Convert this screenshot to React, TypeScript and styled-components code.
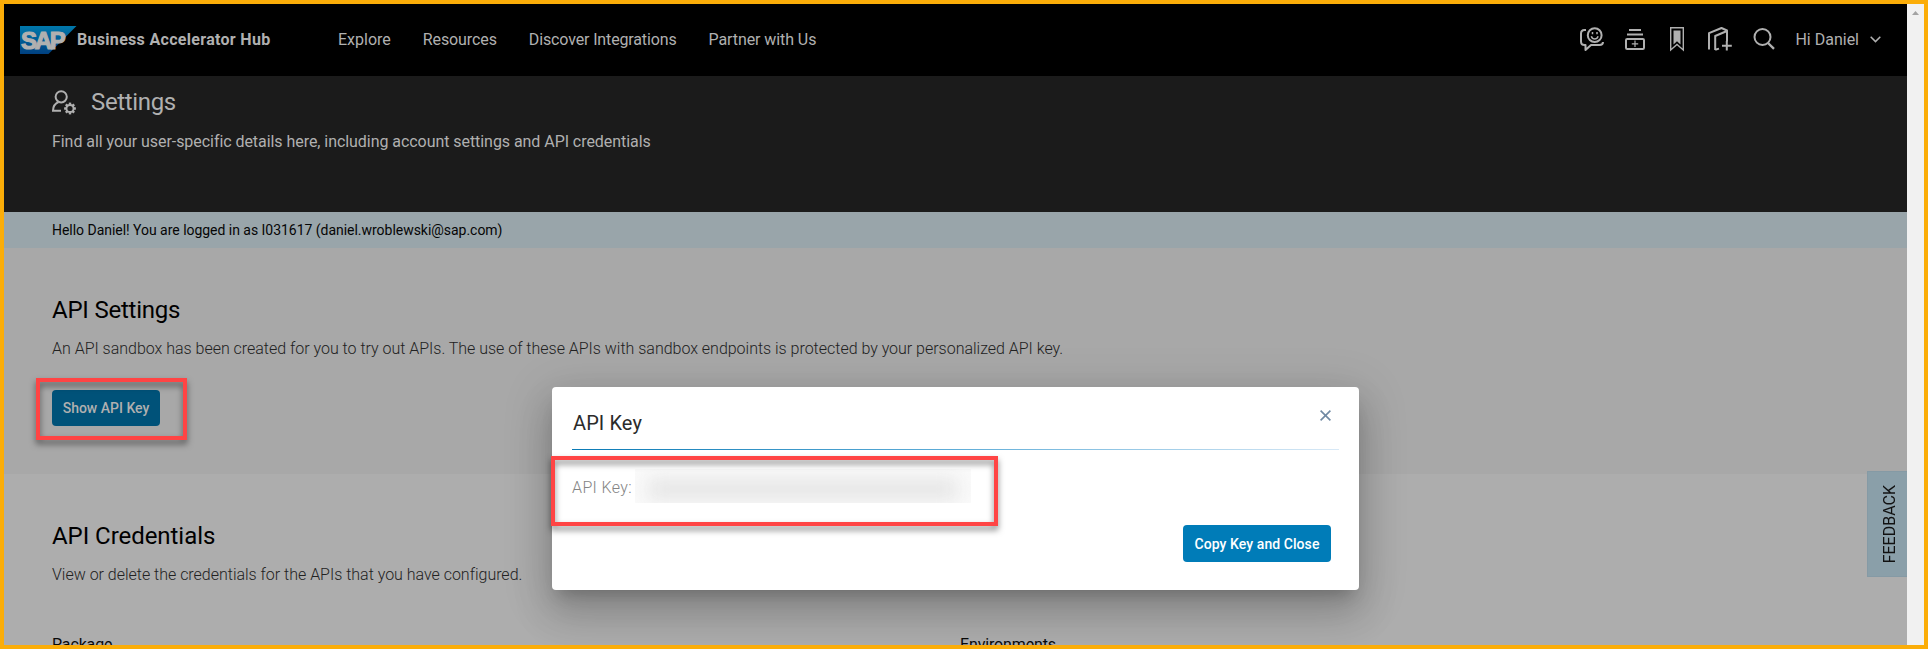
import React from 'react';
import styled, { createGlobalStyle } from 'styled-components';

const GlobalStyle = createGlobalStyle`
  * { box-sizing: border-box; }
  body { margin: 0; font-family: Roboto, "Liberation Sans", sans-serif; }
  h1, h2, h3, p { margin: 0; font-weight: 400; }
  svg { display: block; flex: none; }
`;

const Window = styled.div`
  position: relative;
  display: flex;
  width: 1928px;
  height: 649px;
  border: 4px solid #fbad08;
  overflow: hidden;
`;

const Page = styled.div`
  flex: 1;
  display: flex;
  flex-direction: column;
  height: 641px;
  overflow: hidden;
`;

const Scrollbar = styled.div`
  width: 17px;
  background: #f1f1f1;
  display: flex;
  justify-content: center;
  padding-top: 7px;
`;

const Header = styled.header`
  flex: none;
  display: flex;
  align-items: center;
  height: 72px;
  padding: 0 26px 0 16px;
  background: #000;
  color: #b0b0b0;
`;

const Brand = styled.div`
  display: flex;
  align-items: center;
  width: 318px;
  font-size: 16px;
  font-weight: 700;
  letter-spacing: 0.31px;
  white-space: nowrap;
`;

const BrandName = styled.span`
  padding-bottom: 2px;
`;

const Nav = styled.nav`
  display: flex;
  gap: 32px;
  padding-bottom: 2px;
  font-size: 16px;
`;

const NavLink = styled.a<{ $spacing: number }>`
  letter-spacing: ${(p) => p.$spacing}px;
`;

const Tools = styled.div`
  margin-left: auto;
  display: flex;
  align-items: center;
  height: 28px;
  padding-bottom: 2px;
`;

const ToolIcon = styled.span<{ $gap: number }>`
  margin-right: ${(p) => p.$gap}px;
`;

const UserMenu = styled.div`
  display: flex;
  align-items: center;
  gap: 11px;
  font-size: 16px;
`;

const Hero = styled.section`
  flex: none;
  height: 136px;
  padding: 12px 48px;
  background: #1b1b1b;
  color: #b0b0b0;
`;

const HeroTitle = styled.h1`
  display: flex;
  align-items: center;
  gap: 14px;
  height: 28px;
  font-size: 24px;
  line-height: 28px;
  letter-spacing: -0.35px;
`;

const HeroText = styled.p`
  margin-top: 16px;
  font-size: 16px;
  line-height: 20px;
  letter-spacing: -0.055px;
`;

const LoginBar = styled.div`
  flex: none;
  height: 36px;
  padding-left: 48px;
  background: #99a5aa;
  color: #060606;
  font-size: 14px;
  line-height: 36px;
  letter-spacing: -0.03px;
`;

const Section = styled.section<{ $height: number; $tone: string }>`
  flex: none;
  height: ${(p) => p.$height}px;
  padding: 46px 48px 0;
  background: ${(p) => p.$tone};
`;

const SectionTitle = styled.h2<{ $spacing: number }>`
  color: #000;
  font-size: 24px;
  line-height: 32px;
  letter-spacing: ${(p) => p.$spacing}px;
`;

const SectionText = styled.p`
  margin-top: 11px;
  color: #222;
  font-size: 16px;
  font-weight: 300;
  line-height: 24px;
  letter-spacing: -0.016px;
`;

const Button = styled.button<{ $dimmed?: boolean }>`
  height: ${(p) => (p.$dimmed ? 36 : 37)}px;
  width: ${(p) => (p.$dimmed ? 108 : 148)}px;
  padding: 0;
  border: 0;
  border-radius: 4px;
  background: ${(p) => (p.$dimmed ? '#005279' : '#007cb8')};
  color: ${(p) => (p.$dimmed ? '#b0b0b0' : '#fff')};
  font: 500 14px Roboto, "Liberation Sans", sans-serif;
  letter-spacing: ${(p) => (p.$dimmed ? 0 : 0.07)}px;
`;

const ShowKey = styled.div`
  margin-top: 29px;
`;

const Columns = styled.div`
  display: grid;
  grid-template-columns: 908px 1fr;
  margin-top: 48px;
  color: #0a0a0a;
  font-size: 16px;
  line-height: 20px;
  letter-spacing: -0.15px;
`;

const Feedback = styled.div`
  position: absolute;
  right: 17px;
  top: 467px;
  display: flex;
  align-items: center;
  justify-content: center;
  width: 40px;
  height: 106px;
  padding-left: 4px;
  border: 1px solid #859aa5;
  border-right: 0;
  background: #8a9fa9;
  color: #111;
  font-size: 16px;
  writing-mode: vertical-rl;

  span { transform: rotate(180deg); }
`;

const Dialog = styled.div`
  position: absolute;
  left: 548px;
  top: 383px;
  display: flex;
  flex-direction: column;
  width: 807px;
  height: 203px;
  padding: 22px 20px 0;
  border-radius: 4px;
  background: #fff;
  box-shadow: 0 11px 15px -7px rgba(0, 0, 0, 0.2), 0 24px 38px 3px rgba(0, 0, 0, 0.14),
    0 9px 46px 8px rgba(0, 0, 0, 0.12);
`;

const DialogHead = styled.div`
  display: flex;
  justify-content: space-between;
  height: 40px;
  padding: 0 8px 0 1px;
`;

const DialogTitle = styled.h3`
  color: #2b2b2b;
  font-size: 20px;
  line-height: 28px;
  letter-spacing: 0.1px;
`;

const CloseIcon = styled.svg`
  margin-top: 1px;
`;

const Rule = styled.div`
  flex: none;
  height: 1px;
  background: linear-gradient(90deg, #0a7ab5, #5fadd8 50%, #d9e9f6);
`;

const KeyRow = styled.div`
  display: flex;
  gap: 3px;
  height: 34px;
  margin-top: 19px;
  color: #848484;
  font-size: 16px;
  font-weight: 300;
  line-height: 37px;
  letter-spacing: 0.38px;
  white-space: nowrap;
`;

const HiddenKey = styled.div`
  width: 336px;
  height: 34px;
  overflow: hidden;
  background: #fafafa;

  &::before {
    content: '';
    display: block;
    width: 310px;
    height: 22px;
    margin: 9px 0 0 13px;
    background: #e6e6e6;
    filter: blur(9px);
  }
`;

const DialogFoot = styled.div`
  display: flex;
  justify-content: flex-end;
  margin-top: 22px;
  padding-right: 8px;
`;

const Marker = styled.div<{ $x: number; $y: number; $w: number; $h: number }>`
  position: absolute;
  left: ${(p) => p.$x}px;
  top: ${(p) => p.$y}px;
  width: ${(p) => p.$w}px;
  height: ${(p) => p.$h}px;
  border: 4px solid #ff4444;
  filter: drop-shadow(0 4px 3px rgba(0, 0, 0, 0.5));
`;

const LogoText = styled.text`
  font: 700 24px "Liberation Sans", sans-serif;
`;

const Logo = () => (
  <svg width="57" height="28" viewBox="0 0 57 28">
    <defs>
      <linearGradient id="sap" x1="0" y1="0" x2="0" y2="1">
        <stop offset="0" stopColor="#0078ab" />
        <stop offset="1" stopColor="#004080" />
      </linearGradient>
    </defs>
    <path d="M0 0H56.5L28.5 28H0Z" fill="url(#sap)" />
    <LogoText x="1" y="22.500" textLength="43" lengthAdjust="spacing" letterSpacing="-1.800" fill="#b0b0b0" stroke="#b0b0b0" strokeWidth="1.200">
      SAP
    </LogoText>
  </svg>
);

const stroke = { fill: 'none', stroke: '#b0b0b0' } as const;

const ChatIcon = () => (
  <svg width="24" height="25" viewBox="0 0 24 25" {...stroke} strokeWidth="2">
    <path d="M6 3H4.5Q1 3 1 6.5V14.500Q1 18 4.500 18H5.500V23L11 18H19.500Q23 18 23 15" strokeLinejoin="round" />
    <circle cx="14.700" cy="8.200" r="6.900" />
    <path d="M11.300 9.200Q12.200 12 14.700 12T18.100 9.200" strokeWidth="1.500" />
    <path d="M12.500 5V7.200M17 5V7.200" strokeWidth="1.500" />
  </svg>
);

const StackIcon = () => (
  <svg width="20" height="21" viewBox="0 0 20 21" {...stroke} strokeWidth="2">
    <path d="M4 1H16M2 5.500H18" />
    <rect x="1" y="10" width="18" height="10" rx="1.200" />
    <path d="M10 11.500V18M6.800 14.800H13.200" strokeWidth="1.200" />
  </svg>
);

const BookmarkIcon = () => (
  <svg width="14" height="25" viewBox="0 0 14 25" {...stroke}>
    <path d="M0.700 0.700H13.300V23L7 17.500L0.700 23Z" strokeWidth="1.400" />
    <path d="M3.500 3.500H10.500V17.500L7 14.200L3.500 17.500Z" fill="#b0b0b0" stroke="none" />
  </svg>
);

const PackageIcon = () => (
  <svg width="24" height="25" viewBox="0 0 24 25" {...stroke} strokeWidth="2" strokeLinejoin="round">
    <path d="M1 22.500V6.200L13.500 1L19 3.500V14.500" />
    <path d="M7.200 23V9L19 4" />
    <path d="M7.200 22.800L11 21.600M18.800 14V23.500M14 18.800H23.800" />
  </svg>
);

const SearchIcon = () => (
  <svg width="22" height="22" viewBox="0 0 22 22" {...stroke} strokeWidth="2">
    <circle cx="9.500" cy="9" r="8" />
    <path d="M15 15L21 20.800" strokeWidth="2.400" />
  </svg>
);

const Chevron = () => (
  <svg width="11" height="7" viewBox="0 0 11 7" {...stroke} strokeWidth="1.500">
    <path d="M0.700 0.700L5.500 5.600L10.300 0.700" />
  </svg>
);

const teeth = [0, 45, 90, 135, 180, 225, 270, 315];

const UserSettingsIcon = () => (
  <svg width="25" height="25" viewBox="0 0 25 25" {...stroke} strokeWidth="2">
    <circle cx="9.200" cy="6.800" r="5.600" />
    <path d="M6.500 12Q1 14.500 1 20.700H9" />
    <circle cx="18" cy="18.500" r="3.600" />
    {teeth.map((a) => (
      <path key={a} d="M18 14.800V12.600" strokeWidth="2.400" transform={`rotate(${a} 18 18.500)`} />
    ))}
  </svg>
);

export default function App() {
  return (
    <>
      <GlobalStyle />
      <Window>
        <Page>
          <Header>
            <Brand>
              <Logo />
              <BrandName>Business Accelerator Hub</BrandName>
            </Brand>
            <Nav>
              <NavLink $spacing={0}>Explore</NavLink>
              <NavLink $spacing={-0.1}>Resources</NavLink>
              <NavLink $spacing={-0.14}>Discover Integrations</NavLink>
              <NavLink $spacing={-0.08}>Partner with Us</NavLink>
            </Nav>
            <Tools>
              <ToolIcon $gap={21}><ChatIcon /></ToolIcon>
              <ToolIcon $gap={25}><StackIcon /></ToolIcon>
              <ToolIcon $gap={24}><BookmarkIcon /></ToolIcon>
              <ToolIcon $gap={21}><PackageIcon /></ToolIcon>
              <ToolIcon $gap={20}><SearchIcon /></ToolIcon>
              <UserMenu>
                Hi Daniel
                <Chevron />
              </UserMenu>
            </Tools>
          </Header>
          <Hero>
            <HeroTitle>
              <UserSettingsIcon />
              Settings
            </HeroTitle>
            <HeroText>
              Find all your user-specific details here, including account settings and API credentials
            </HeroText>
          </Hero>
          <LoginBar>Hello Daniel! You are logged in as I031617 (daniel.wroblewski@sap.com)</LoginBar>
          <Section $height={226} $tone="#a8a8a8">
            <SectionTitle $spacing={-0.22}>API Settings</SectionTitle>
            <SectionText>
              An API sandbox has been created for you to try out APIs. The use of these APIs with sandbox endpoints is
              protected by your personalized API key.
            </SectionText>
            <ShowKey>
              <Button $dimmed>Show API Key</Button>
            </ShowKey>
          </Section>
          <Section $height={175} $tone="#adadad">
            <SectionTitle $spacing={-0.05}>API Credentials</SectionTitle>
            <SectionText>View or delete the credentials for the APIs that you have configured.</SectionText>
            <Columns>
              <span>Package</span>
              <span>Environments</span>
            </Columns>
          </Section>
        </Page>
        <Scrollbar>
          <svg width="7" height="4" viewBox="0 0 7 4">
            <path d="M3.500 0L7 4H0Z" fill="#a3a3a3" />
          </svg>
        </Scrollbar>
        <Feedback>
          <span>FEEDBACK</span>
        </Feedback>
        <Dialog>
          <DialogHead>
            <DialogTitle>API Key</DialogTitle>
            <CloseIcon width="11" height="11" viewBox="0 0 11 11" fill="none" stroke="#7089a3" strokeWidth="1.600">
              <path d="M0.600 0.600L10.400 10.400M10.400 0.600L0.600 10.400" />
            </CloseIcon>
          </DialogHead>
          <Rule />
          <KeyRow>
            API Key:
            <HiddenKey />
          </KeyRow>
          <DialogFoot>
            <Button>Copy Key and Close</Button>
          </DialogFoot>
        </Dialog>
        <Marker $x={32} $y={374} $w={151} $h={62} />
        <Marker $x={547} $y={452} $w={447} $h={70} />
      </Window>
    </>
  );
}
